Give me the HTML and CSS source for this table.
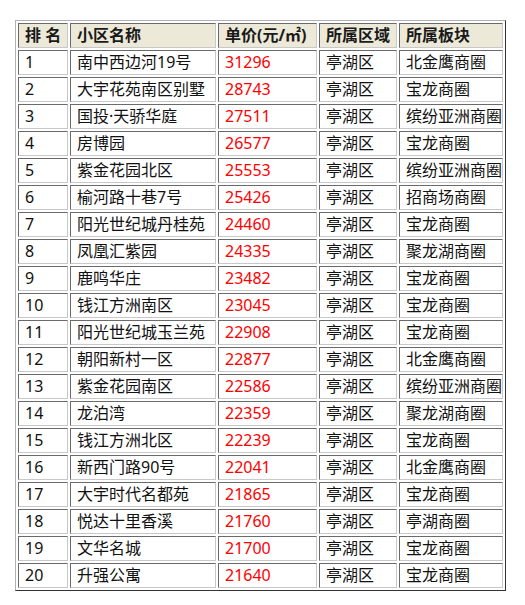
FILE: index.html
```html
<!DOCTYPE html>
<html lang="zh">
<head>
<meta charset="utf-8">
<link rel="stylesheet" href="styles.css">
</head>
<body>
<table class="rank">
<colgroup>
<col class="c1"><col class="c2"><col class="c3"><col class="c4"><col class="c5">
</colgroup>
<thead>
<tr><th>排 名</th><th>小区名称</th><th>单价(元/㎡)</th><th>所属区域</th><th>所属板块</th></tr>
</thead>
<tbody>
<tr><td>1</td><td>南中西边河19号</td><td class="price">31296</td><td>亭湖区</td><td>北金鹰商圈</td></tr>
<tr><td>2</td><td>大宇花苑南区别墅</td><td class="price">28743</td><td>亭湖区</td><td>宝龙商圈</td></tr>
<tr><td>3</td><td>国投·天骄华庭</td><td class="price">27511</td><td>亭湖区</td><td>缤纷亚洲商圈</td></tr>
<tr><td>4</td><td>房博园</td><td class="price">26577</td><td>亭湖区</td><td>宝龙商圈</td></tr>
<tr><td>5</td><td>紫金花园北区</td><td class="price">25553</td><td>亭湖区</td><td>缤纷亚洲商圈</td></tr>
<tr><td>6</td><td>榆河路十巷7号</td><td class="price">25426</td><td>亭湖区</td><td>招商场商圈</td></tr>
<tr><td>7</td><td>阳光世纪城丹桂苑</td><td class="price">24460</td><td>亭湖区</td><td>宝龙商圈</td></tr>
<tr><td>8</td><td>凤凰汇紫园</td><td class="price">24335</td><td>亭湖区</td><td>聚龙湖商圈</td></tr>
<tr><td>9</td><td>鹿鸣华庄</td><td class="price">23482</td><td>亭湖区</td><td>宝龙商圈</td></tr>
<tr><td>10</td><td>钱江方洲南区</td><td class="price">23045</td><td>亭湖区</td><td>宝龙商圈</td></tr>
<tr><td>11</td><td>阳光世纪城玉兰苑</td><td class="price">22908</td><td>亭湖区</td><td>宝龙商圈</td></tr>
<tr><td>12</td><td>朝阳新村一区</td><td class="price">22877</td><td>亭湖区</td><td>北金鹰商圈</td></tr>
<tr><td>13</td><td>紫金花园南区</td><td class="price">22586</td><td>亭湖区</td><td>缤纷亚洲商圈</td></tr>
<tr><td>14</td><td>龙泊湾</td><td class="price">22359</td><td>亭湖区</td><td>聚龙湖商圈</td></tr>
<tr><td>15</td><td>钱江方洲北区</td><td class="price">22239</td><td>亭湖区</td><td>宝龙商圈</td></tr>
<tr><td>16</td><td>新西门路90号</td><td class="price">22041</td><td>亭湖区</td><td>北金鹰商圈</td></tr>
<tr><td>17</td><td>大宇时代名都苑</td><td class="price">21865</td><td>亭湖区</td><td>宝龙商圈</td></tr>
<tr><td>18</td><td>悦达十里香溪</td><td class="price">21760</td><td>亭湖区</td><td>亭湖商圈</td></tr>
<tr><td>19</td><td>文华名城</td><td class="price">21700</td><td>亭湖区</td><td>宝龙商圈</td></tr>
<tr><td>20</td><td>升强公寓</td><td class="price">21640</td><td>亭湖区</td><td>宝龙商圈</td></tr>
</tbody>
</table>
</body>
</html>
```
FILE: styles.css
```css
html, body {
  margin: 0;
  padding: 0;
  background: #ffffff;
}
body {
  padding: 20px 15px;
  font-family: "Noto Sans", "Noto Sans CJK SC", sans-serif;
}
.rank {
  border-collapse: separate;
  border-spacing: 2px;
  border-width: 1px;
  border-style: solid;
  border-color: #b0b0b0 #333333 #333333 #b0b0b0;
  table-layout: fixed;
  width: 491px;
}
.c1 { width: 50px; }
.c2 { width: 146px; }
.c3 { width: 99px; }
.c4 { width: 78px; }
.c5 { width: 104px; }
.rank th,
.rank td {
  border-width: 1px;
  border-style: solid;
  border-color: #6a6a6a #c8c8c8 #c8c8c8 #6a6a6a;
  height: 25px;
  box-sizing: border-box;
  padding: 0 0 0 6px;
  font-size: 16px;
  line-height: 23px;
  text-align: left;
  white-space: nowrap;
  overflow: hidden;
  color: #111111;
}
.rank th {
  background: #ece9d8;
  font-weight: bold;
  color: #1a1a1a;
}
.rank td.price {
  color: #ff0000;
}
```
